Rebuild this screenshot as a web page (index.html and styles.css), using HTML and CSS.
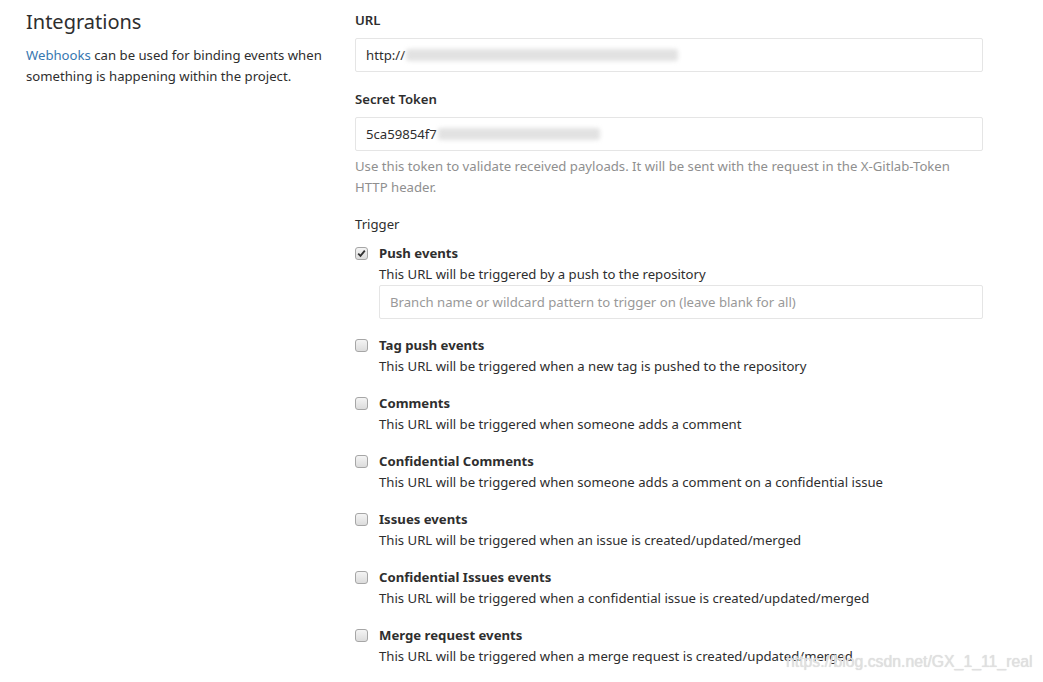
FILE: index.html
```html
<!DOCTYPE html>
<html>
<head>
<meta charset="utf-8">
<link rel="stylesheet" href="styles.css">
</head>
<body>
<div class="page">
  <div class="side">
    <h4 class="side-title">Integrations</h4>
    <p class="side-text"><a class="link">Webhooks</a> can be used for binding events when something is happening within the project.</p>
  </div>
  <div class="main">
    <div class="field field-url">
      <div class="label">URL</div>
      <div class="input"><span>http://</span><span class="redact redact-url"></span></div>
    </div>
    <div class="field">
      <div class="label">Secret Token</div>
      <div class="input"><span>5ca59854f7</span><span class="redact redact-token"></span></div>
      <p class="help">Use this token to validate received payloads. It will be sent with the request in the X-Gitlab-Token HTTP header.</p>
    </div>
    <div class="field">
      <div class="label label-normal">Trigger</div>
      <ul class="triggers">
        <li class="trigger">
          <span class="check checked"><svg width="9" height="9" viewBox="0 0 9 9"><path d="M1.2 4.6 L3.5 6.9 L7.8 1.6" fill="none" stroke="#333" stroke-width="1.8"/></svg></span>
          <div class="trigger-body">
            <div class="trigger-title">Push events</div>
            <div class="trigger-desc">This URL will be triggered by a push to the repository</div>
            <div class="input input-sub placeholder">Branch name or wildcard pattern to trigger on (leave blank for all)</div>
          </div>
        </li>
        <li class="trigger">
          <span class="check"></span>
          <div class="trigger-body">
            <div class="trigger-title">Tag push events</div>
            <div class="trigger-desc">This URL will be triggered when a new tag is pushed to the repository</div>
          </div>
        </li>
        <li class="trigger">
          <span class="check"></span>
          <div class="trigger-body">
            <div class="trigger-title">Comments</div>
            <div class="trigger-desc">This URL will be triggered when someone adds a comment</div>
          </div>
        </li>
        <li class="trigger">
          <span class="check"></span>
          <div class="trigger-body">
            <div class="trigger-title">Confidential Comments</div>
            <div class="trigger-desc">This URL will be triggered when someone adds a comment on a confidential issue</div>
          </div>
        </li>
        <li class="trigger">
          <span class="check"></span>
          <div class="trigger-body">
            <div class="trigger-title">Issues events</div>
            <div class="trigger-desc">This URL will be triggered when an issue is created/updated/merged</div>
          </div>
        </li>
        <li class="trigger">
          <span class="check"></span>
          <div class="trigger-body">
            <div class="trigger-title">Confidential Issues events</div>
            <div class="trigger-desc">This URL will be triggered when a confidential issue is created/updated/merged</div>
          </div>
        </li>
        <li class="trigger">
          <span class="check"></span>
          <div class="trigger-body">
            <div class="trigger-title">Merge request events</div>
            <div class="trigger-desc">This URL will be triggered when a merge request is created/updated/merged</div>
          </div>
        </li>
      </ul>
    </div>
  </div>
</div>
<div class="watermark">https://blog.csdn.net/GX_1_11_real</div>
</body>
</html>
```
FILE: styles.css
```css
html, body {
  margin: 0;
  padding: 0;
  background: #fff;
}
body {
  font-family: "Noto Sans", "Open Sans", sans-serif;
  font-size: 13.16px;
  line-height: 21px;
  color: #2e2e2e;
  position: relative;
  height: 682px;
  overflow: hidden;
}
.page {
  display: flex;
}
.side {
  width: 303px;
  padding-left: 26px;
  flex: none;
}
.side-title {
  margin: 10px 0 0;
  font-size: 20px;
  line-height: 24px;
  font-weight: 400;
  color: #2e2e2e;
}
.side-text {
  margin: 11px 0 0;
}
.link {
  color: #3777b0;
  text-decoration: none;
}
.main {
  width: 628px;
  padding-left: 26px;
  padding-top: 10px;
  flex: none;
}
.field {
  margin-bottom: 16px;
}
.field-url {
  margin-bottom: 17px;
}
.label {
  font-weight: 600;
  margin-bottom: 7px;
}
.label-normal {
  font-weight: 400;
  margin-bottom: 8px;
}
.input {
  box-sizing: border-box;
  height: 34px;
  border: 1px solid #e5e5e5;
  border-radius: 2px;
  padding: 0 10px;
  display: flex;
  align-items: center;
  color: #2e2e2e;
  white-space: nowrap;
}
.placeholder {
  color: #999;
}
.input-sub {
  margin-top: 0;
}
.redact {
  display: inline-block;
  height: 12px;
  background: #e2e2e2;
  filter: blur(2px);
  border-radius: 3px;
}
.redact-url {
  width: 272px;
  margin-left: 1px;
}
.redact-token {
  width: 162px;
  margin-left: 1px;
}
.help {
  margin: 5px 0 0;
  color: #8f8f8f;
}
.triggers {
  list-style: none;
  margin: 0;
  padding: 0;
}
.trigger {
  display: flex;
  margin-bottom: 16px;
}
.check {
  box-sizing: border-box;
  flex: none;
  width: 13px;
  height: 13px;
  margin-top: 4px;
  margin-right: 11px;
  border: 1px solid #a6a6a6;
  border-radius: 3px;
  background: linear-gradient(#f4f4f4, #dcdcdc);
  display: flex;
  align-items: center;
  justify-content: center;
}
.trigger-body {
  flex: 1;
}
.trigger-title {
  font-weight: 700;
}
.watermark {
  position: absolute;
  left: 786px;
  top: 652px;
  font-family: "Liberation Sans", Arial, sans-serif;
  font-size: 15.8px;
  line-height: 20px;
  color: #e0e0e0;
  text-shadow: 0 0 1px #d4d4d4;
  white-space: nowrap;
}
```
